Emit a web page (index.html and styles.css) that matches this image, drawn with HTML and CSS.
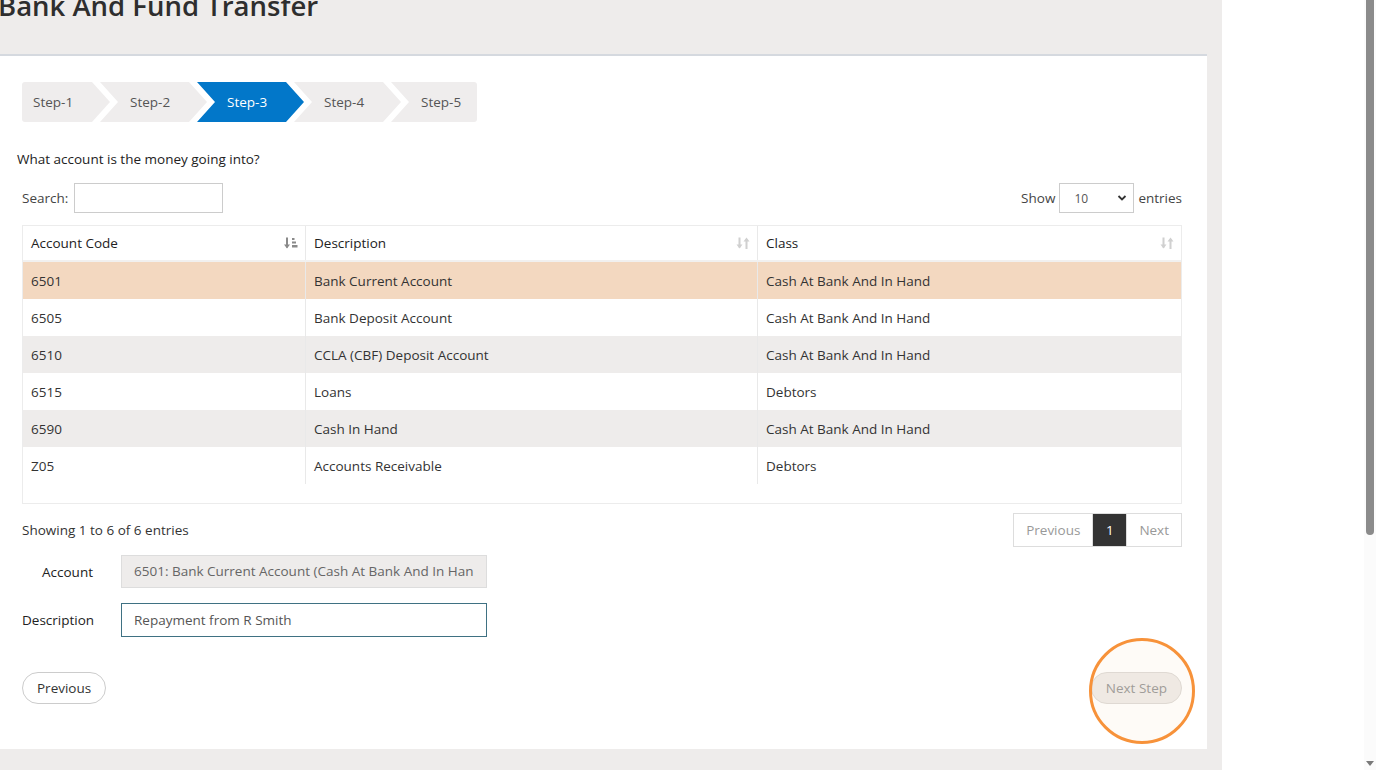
FILE: index.html
```html
<!DOCTYPE html>
<html lang="en">
<head>
    <meta charset="UTF-8">
    <title>Bank And Fund Transfer</title>
    <link rel="stylesheet" href="styles.css">
</head>
<body>
    <div class="viewport">
        <main class="page">
            <h1 class="page-title">Bank And Fund Transfer</h1>

            <section class="card">
                <ul class="steps">
                    <li class="step">Step-1</li>
                    <li class="step">Step-2</li>
                    <li class="step active">Step-3</li>
                    <li class="step">Step-4</li>
                    <li class="step">Step-5</li>
                </ul>

                <p class="question">What account is the money going into?</p>

                <div class="table-controls">
                    <label class="search">Search: <span class="search-box"></span></label>
                    <div class="length">
                        Show
                        <div class="select">
                            <span>10</span>
                            <svg width="10" height="8" viewBox="0 0 10 8"><path d="M1.5 2l3.5 3.5L8.5 2" fill="none" stroke="#333" stroke-width="1.8"/></svg>
                        </div>
                        entries
                    </div>
                </div>

                <div class="table-wrap">
                    <table class="accounts">
                        <thead>
                            <tr>
                                <th class="col-code">Account Code
                                    <svg class="sort sort-on" width="14" height="14" viewBox="0 0 14 14">
                                        <path d="M3 1.5v10" stroke="currentColor" stroke-width="2"/>
                                        <path d="M0 8.5l3 4 3-4z" fill="currentColor"/>
                                        <rect x="8" y="2" width="2.5" height="2" fill="currentColor"/>
                                        <rect x="8" y="5.5" width="4" height="2" fill="currentColor"/>
                                        <rect x="8" y="9" width="5.5" height="2.5" fill="currentColor"/>
                                    </svg>
                                </th>
                                <th class="col-desc">Description
                                    <svg class="sort" width="14" height="14" viewBox="0 0 14 14">
                                        <path d="M3.5 1.5v10M10.5 3v10" stroke="currentColor" stroke-width="2"/>
                                        <path d="M0.5 8.5l3 4 3-4zM7.5 5.5l3-4 3 4z" fill="currentColor"/>
                                    </svg>
                                </th>
                                <th class="col-class">Class
                                    <svg class="sort" width="14" height="14" viewBox="0 0 14 14">
                                        <path d="M3.5 1.5v10M10.5 3v10" stroke="currentColor" stroke-width="2"/>
                                        <path d="M0.5 8.5l3 4 3-4zM7.5 5.5l3-4 3 4z" fill="currentColor"/>
                                    </svg>
                                </th>
                            </tr>
                        </thead>
                        <tbody>
                            <tr class="selected"><td>6501</td><td>Bank Current Account</td><td>Cash At Bank And In Hand</td></tr>
                            <tr><td>6505</td><td>Bank Deposit Account</td><td>Cash At Bank And In Hand</td></tr>
                            <tr class="odd"><td>6510</td><td>CCLA (CBF) Deposit Account</td><td>Cash At Bank And In Hand</td></tr>
                            <tr><td>6515</td><td>Loans</td><td>Debtors</td></tr>
                            <tr class="odd"><td>6590</td><td>Cash In Hand</td><td>Cash At Bank And In Hand</td></tr>
                            <tr><td>Z05</td><td>Accounts Receivable</td><td>Debtors</td></tr>
                        </tbody>
                    </table>
                </div>

                <div class="table-info">
                    <span>Showing 1 to 6 of 6 entries</span>
                    <div class="pager">
                        <span class="page-btn">Previous</span>
                        <span class="page-btn current">1</span>
                        <span class="page-btn">Next</span>
                    </div>
                </div>

                <div class="form-row first">
                    <label>Account</label>
                    <div class="field readonly">6501: Bank Current Account (Cash At Bank And In Han</div>
                </div>
                <div class="form-row">
                    <label>Description</label>
                    <div class="field focused">Repayment from R Smith</div>
                </div>

                <div class="actions">
                    <button class="btn">Previous</button>
                    <div class="next-wrap">
                        <button class="btn btn-disabled">Next Step</button>
                        <span class="highlight"></span>
                    </div>
                </div>
            </section>
        </main>
        <div class="gutter"></div>
        <div class="scrollbar">
            <div class="thumb"></div>
            <span class="scroll-arrow"></span>
        </div>
    </div>
</body>
</html>
```

FILE: styles.css
```css
body {
    margin: 0;
    font-family: "Open Sans", "Liberation Sans", sans-serif;
    font-size: 13.5px;
    color: #333;
    overflow: hidden;
}

.viewport {
    display: flex;
    height: 770px;
}

.page {
    width: 1222px;
    flex-shrink: 0;
    background: #eeeceb;
}

.gutter {
    flex: 1;
    background: #fff;
}

.scrollbar {
    width: 12px;
    background: #fbfbfb;
    display: flex;
    flex-direction: column;
    align-items: center;
}

.thumb {
    width: 8px;
    height: 535px;
    background: #8b8b8b;
    border-radius: 0 0 4px 4px;
}

.scroll-arrow {
    margin-top: auto;
    margin-bottom: 4px;
    width: 0;
    height: 0;
    border-left: 4px solid transparent;
    border-right: 4px solid transparent;
    border-top: 5px solid #7a7a7a;
}

.page-title {
    margin: -12px 0 30px -2px;
    height: 36px;
    line-height: 36px;
    font-size: 27.5px;
    font-weight: 600;
    color: #2e2e2e;
}

.card {
    background: #fff;
    margin-right: 15px;
    border-top: 2px solid #d5d9df;
    height: 695px;
    box-sizing: border-box;
    padding: 26px 25px 0 22px;
}

/* steps */
.steps {
    display: flex;
    list-style: none;
    margin: 0;
    padding: 0;
    height: 40px;
}

.step {
    width: 107px;
    height: 40px;
    line-height: 40px;
    margin-left: -10px;
    padding-left: 30px;
    box-sizing: border-box;
    background: #efeded;
    color: #555;
    clip-path: polygon(0 0, 89px 0, 100% 50%, 89px 100%, 0 100%, 18px 50%);
}

.step:first-child {
    margin-left: 0;
    width: 88px;
    padding-left: 11px;
    border-radius: 3px 0 0 3px;
    clip-path: polygon(0 0, 70px 0, 100% 50%, 70px 100%, 0 100%);
}

.step:last-child {
    width: 86px;
    border-radius: 0 3px 3px 0;
    clip-path: polygon(0 0, 100% 0, 100% 100%, 0 100%, 18px 50%);
}

.step.active {
    background: #0277c9;
    color: #fff;
}

.question {
    margin: 28px 0 0 -5px;
    line-height: 18px;
    color: #222;
}

.table-controls {
    display: flex;
    justify-content: space-between;
    align-items: center;
    margin-top: 15px;
    height: 30px;
}

.search {
    display: flex;
    align-items: center;
    gap: 6px;
    color: #444;
}

.search-box {
    width: 147px;
    height: 28px;
    border: 1px solid #ccc;
}

.length {
    display: flex;
    align-items: center;
    gap: 4px;
    color: #444;
}

.select {
    height: 28px;
    border: 1px solid #ccc;
    display: flex;
    align-items: center;
    justify-content: space-between;
    padding: 0 6px 0 14px;
    width: 53px;
    font-size: 12px;
    color: #555;
}

/* table */
.table-wrap {
    margin-top: 12px;
    border: 1px solid #ececec;
    padding-bottom: 19px;
}

.accounts {
    width: 100%;
    border-collapse: collapse;
    table-layout: fixed;
}

.accounts th {
    position: relative;
    text-align: left;
    font-weight: 400;
    color: #222;
    height: 34px;
    padding: 0 8px;
    border-bottom: 2px solid #f1f0ef;
}

.accounts td {
    height: 37px;
    padding: 0 8px;
    color: #333;
}

.accounts th + th,
.accounts td + td {
    border-left: 1px solid #e9e9e9;
}

.col-code { width: 266px; }
.col-desc { width: 435px; }

.sort {
    position: absolute;
    right: 7px;
    top: 10px;
    color: #d0d0d0;
}

.sort.sort-on {
    color: #8a8a8a;
}

.accounts tr.selected td {
    background: #f3d8c0;
}

.accounts tr.odd td {
    background: #eeeceb;
}

.table-info {
    display: flex;
    justify-content: space-between;
    align-items: center;
    margin-top: 9px;
    color: #333;
}

.pager {
    display: flex;
    border: 1px solid #ddd;
    height: 32px;
}

.page-btn {
    display: flex;
    align-items: center;
    padding: 0 12px;
    color: #999;
}

.page-btn + .page-btn {
    border-left: 1px solid #ddd;
}

.page-btn.current {
    background: #333;
    color: #fff;
    width: 9px;
    justify-content: center;
}

/* form */
.form-row {
    display: flex;
    align-items: center;
    gap: 28px;
    margin-top: 15px;
}

.form-row.first {
    margin-top: 8px;
}

.form-row label {
    width: 71px;
    text-align: right;
    color: #222;
}

.field {
    width: 340px;
    height: 31px;
    line-height: 31px;
    padding: 0 12px;
    border: 1px solid #ddd;
    color: #555;
    white-space: nowrap;
    overflow: hidden;
}

.field.readonly {
    background: #eeeceb;
    color: #666;
}

.field.focused {
    height: 32px;
    line-height: 32px;
    border-color: #3f7183;
}

.actions {
    display: flex;
    justify-content: space-between;
    margin-top: 35px;
}

.btn {
    height: 32px;
    padding: 0 14px;
    border: 1px solid #ccc;
    border-radius: 16px;
    background: #fff;
    color: #333;
    font-family: inherit;
    font-size: 13.5px;
}

.btn-disabled {
    background: #efecea;
    border-color: #dedbd8;
    color: #999;
}

.next-wrap {
    position: relative;
}

.highlight {
    position: absolute;
    left: -2px;
    top: -34px;
    width: 106px;
    height: 106px;
    box-sizing: border-box;
    border: 3px solid #f7923a;
    border-radius: 50%;
    background: rgba(247, 200, 150, 0.08);
}
```
